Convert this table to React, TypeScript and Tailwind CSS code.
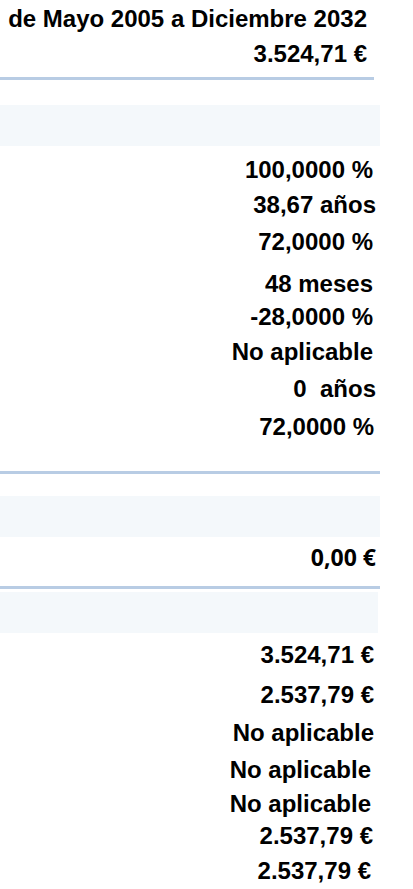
import React from 'react';

interface ValueRowProps {
  h: string;
  pr: string;
  alt?: boolean;
  children: React.ReactNode;
}

// one right-aligned value cell
const ValueRow: React.FC<ValueRowProps> = ({ h, pr, alt, children }) => (
  <div className={`flex items-center justify-end ${h} ${pr}`}>
    <span
      className={
        alt
          ? "font-['Open_Sans',sans-serif] text-[23px] font-bold leading-none whitespace-pre text-black"
          : "font-['Liberation_Sans',Arial,sans-serif] text-[24px] font-bold leading-none whitespace-pre text-black"
      }
    >
      {children}
    </span>
  </div>
);

const App: React.FC = () => {
  return (
    <div className="w-[413px] h-[889px] overflow-hidden bg-white">
      {/* Period / total */}
      <ValueRow h="h-[38px]" pr="pr-[46px]">de Mayo 2005 a Diciembre 2032</ValueRow>
      <ValueRow h="h-[32px]" pr="pr-[46px]">3.524,71 €</ValueRow>
      <div className="h-[7px]" />
      <div className="h-[3px] w-[374px] bg-[#b8cce4]" />
      <div className="h-[25px]" />
      <div className="h-[41px] w-[380px] bg-[#f4f8fb]" />

      {/* Percentages and terms */}
      <ValueRow h="h-[48px]" pr="pr-[40px]">100,0000 %</ValueRow>
      <ValueRow h="h-[22px]" pr="pr-[37px]">38,67 años</ValueRow>
      <ValueRow h="h-[52px]" pr="pr-[40px]">72,0000 %</ValueRow>
      <ValueRow h="h-[32px]" pr="pr-[40px]">48 meses</ValueRow>
      <ValueRow h="h-[34px]" pr="pr-[40px]">-28,0000 %</ValueRow>
      <ValueRow h="h-[35px]" pr="pr-[40px]">No aplicable</ValueRow>
      <ValueRow h="h-[39px]" pr="pr-[37px]">0  años</ValueRow>
      <ValueRow h="h-[38px]" pr="pr-[39px]">72,0000 %</ValueRow>
      <div className="h-[25px]" />
      <div className="h-[3px] w-[380px] bg-[#b8cce4]" />
      <div className="h-[22px]" />
      <div className="h-[41px] w-[380px] bg-[#f4f8fb]" />

      <ValueRow h="h-[40px]" pr="pr-[37px]" alt>0,00 €</ValueRow>
      <div className="h-[9px]" />
      <div className="h-[3px] w-[380px] bg-[#b8cce4]" />
      <div className="h-[3px]" />
      <div className="h-[41px] w-[378px] bg-[#f4f8fb]" />

      {/* Amounts */}
      <ValueRow h="h-[43px]" pr="pr-[39px]">3.524,71 €</ValueRow>
      <ValueRow h="h-[37px]" pr="pr-[39px]">2.537,79 €</ValueRow>
      <ValueRow h="h-[40px]" pr="pr-[39px]">No aplicable</ValueRow>
      <ValueRow h="h-[33px]" pr="pr-[42px]">No aplicable</ValueRow>
      <ValueRow h="h-[35px]" pr="pr-[42px]">No aplicable</ValueRow>
      <ValueRow h="h-[30px]" pr="pr-[40px]">2.537,79 €</ValueRow>
      <ValueRow h="h-[40px]" pr="pr-[42px]">2.537,79 €</ValueRow>
    </div>
  );
};

export default App;
